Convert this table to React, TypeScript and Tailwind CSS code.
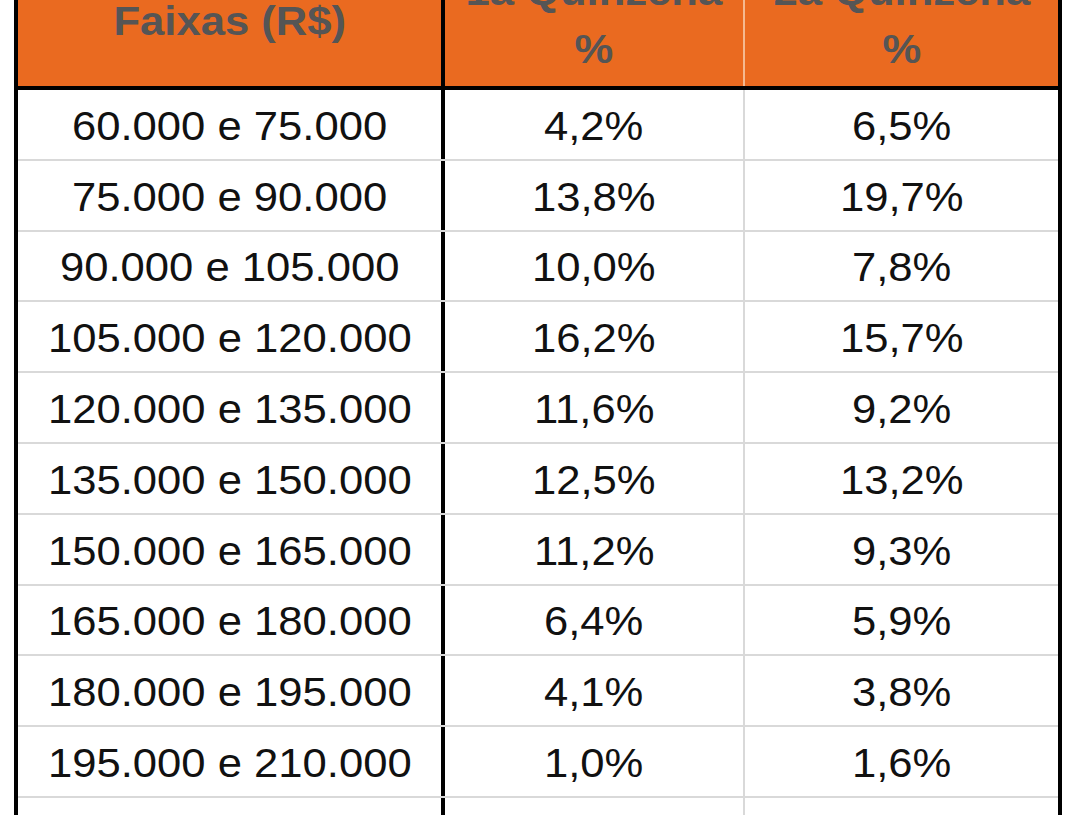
const rows = [
  { faixa: "60.000 e 75.000", q1: "4,2%", q2: "6,5%" },
  { faixa: "75.000 e 90.000", q1: "13,8%", q2: "19,7%" },
  { faixa: "90.000 e 105.000", q1: "10,0%", q2: "7,8%" },
  { faixa: "105.000 e 120.000", q1: "16,2%", q2: "15,7%" },
  { faixa: "120.000 e 135.000", q1: "11,6%", q2: "9,2%" },
  { faixa: "135.000 e 150.000", q1: "12,5%", q2: "13,2%" },
  { faixa: "150.000 e 165.000", q1: "11,2%", q2: "9,3%" },
  { faixa: "165.000 e 180.000", q1: "6,4%", q2: "5,9%" },
  { faixa: "180.000 e 195.000", q1: "4,1%", q2: "3,8%" },
  { faixa: "195.000 e 210.000", q1: "1,0%", q2: "1,6%" },
  { faixa: "210.000 e 225.000", q1: "0,6%", q2: "0,7%" },
];

function Cell({ children }: { children: React.ReactNode }) {
  return <span className="inline-block scale-x-[1.09] whitespace-nowrap">{children}</span>;
}

export default function App() {
  return (
    <div
      className="h-[815px] w-[1080px] overflow-hidden bg-white"
      style={{ fontFamily: '"Liberation Sans", Arial, sans-serif' }}
    >
      <div className="-mt-[46px] ml-[14px] w-[1048px] border-x-4 border-black">
        {/* Header */}
        <div className="flex h-[136px] border-b-4 border-black bg-[#ea6a20] text-[40px] font-bold leading-[58px] text-[#555555]">
          <div className="flex w-[427px] items-center justify-center border-r-4 border-black pt-[2px]">
            <Cell>Faixas (R$)</Cell>
          </div>
          <div className="flex w-[300px] flex-col items-center justify-center border-r-2 border-[#f5b990]">
            <Cell>1a Quinzena</Cell>
            <Cell>%</Cell>
          </div>
          <div className="flex flex-1 flex-col items-center justify-center">
            <Cell>2a Quinzena</Cell>
            <Cell>%</Cell>
          </div>
        </div>

        {rows.map((r) => (
          <div
            key={r.faixa}
            className="flex h-[70.8px] border-b-2 border-[#d9d9d9] text-[40px] leading-none text-[#111111]"
          >
            <div className="flex w-[427px] items-center justify-center border-r-4 border-black pt-[3px]">
              <Cell>{r.faixa}</Cell>
            </div>
            <div className="flex w-[300px] items-center justify-center border-r-2 border-[#d9d9d9] pt-[3px]">
              <Cell>{r.q1}</Cell>
            </div>
            <div className="flex flex-1 items-center justify-center pt-[3px]">
              <Cell>{r.q2}</Cell>
            </div>
          </div>
        ))}
      </div>
    </div>
  );
}
